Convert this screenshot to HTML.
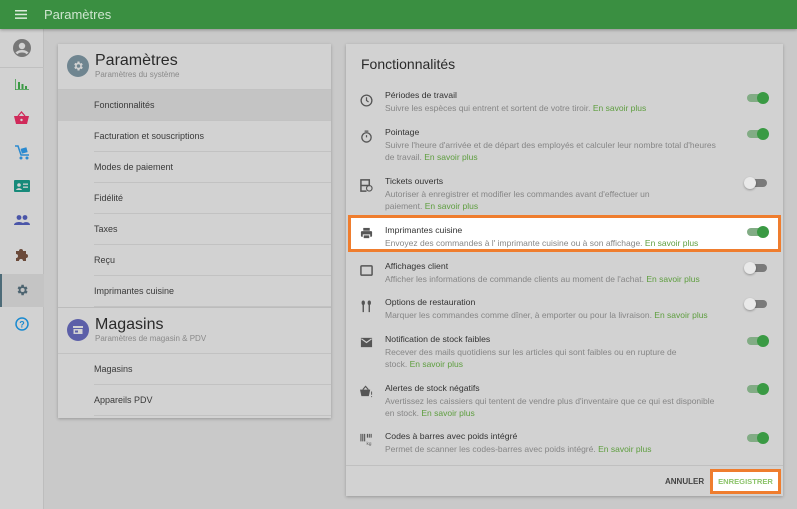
<!DOCTYPE html>
<html><head><meta charset="utf-8"><style>
*{box-sizing:border-box;margin:0;padding:0}
body{width:797px;height:509px;background:#c9c9c9;font-family:"Liberation Sans",sans-serif;position:relative;overflow:hidden;color:#333}
.top{position:absolute;left:0;top:0;width:797px;height:29px;background:#3a8f41;box-shadow:0 1px 3px rgba(0,0,0,.3);z-index:2}
.top .t{position:absolute;left:44px;top:7px;color:#cfe6d0;font-size:13px}
.side{position:absolute;left:0;top:29px;width:44px;height:480px;background:#d2d2d2;border-right:1px solid #bdbdbd}
.card{position:absolute;background:#d2d2d2;box-shadow:0 1px 3px rgba(0,0,0,.25)}
.row{position:absolute;left:0;right:0;height:31px;font-size:9px;color:#3a3a3a;padding-left:36px;line-height:31px}
.row:after{content:"";position:absolute;left:36px;right:0;bottom:0;border-bottom:1px solid #c2c2c2}
.f{position:absolute;left:39px;font-size:8.5px;line-height:12px;color:#868686;width:380px;white-space:nowrap}
.f b{display:block;font-weight:normal;color:#333;font-size:8.7px;margin-bottom:1px}
.f i{font-style:normal;color:#5e9e3f}
.tg{position:absolute;left:401px;width:20px;height:8px;border-radius:4px}
.tg:after{content:"";position:absolute;top:-2px;width:12px;height:12px;border-radius:6px}
.on{background:#82ac85}.on:after{right:-2px;background:#3a9a44}
.off{background:#7a7a7a}.off:after{left:-3px;background:#e9e9e9;box-shadow:0 1px 2px rgba(0,0,0,.3)}
.ri{position:absolute;left:14px;width:13px;height:13px}
</style></head><body>
<div class="top">
<svg style="position:absolute;left:15px;top:10px" width="12" height="9"><rect y="0" width="12" height="1.5" fill="#dcebdc"/><rect y="3.7" width="12" height="1.5" fill="#dcebdc"/><rect y="7.4" width="12" height="1.5" fill="#dcebdc"/></svg>
<div class="t">Paramètres</div></div>
<div class="side">
<svg style="position:absolute;left:13px;top:10px" width="18" height="18"><circle cx="9" cy="9" r="9" fill="#777"/><circle cx="9" cy="7" r="3.2" fill="#d2d2d2"/><path d="M3.5 14.5c2-3 9-3 11 0" stroke="#d2d2d2" stroke-width="2.5" fill="none"/></svg>
<div style="position:absolute;left:0;top:38px;width:44px;border-top:1px solid #c0c0c0"></div>
<svg style="position:absolute;left:15px;top:50px" width="14" height="11"><path d="M0 0v11h14" stroke="#3b9a44" stroke-width="1.5" fill="none"/><rect x="3" y="3" width="2" height="7" fill="#3b9a44"/><rect x="6.5" y="5" width="2" height="5" fill="#3b9a44"/><rect x="10" y="7" width="2" height="3" fill="#3b9a44"/></svg>
<svg style="position:absolute;left:14px;top:82px" width="15" height="13"><path d="M4 5l3.5-4 3.5 4" stroke="#d02a5a" stroke-width="1.3" fill="none"/><path d="M0 5h15l-2 8H2z" fill="#d02a5a"/><circle cx="7.5" cy="9" r="1.2" fill="#d2d2d2"/></svg>
<svg style="position:absolute;left:14px;top:116px" width="16" height="15"><path d="M1 1h3l3 9h8" stroke="#2a8ad0" stroke-width="1.5" fill="none"/><rect x="7" y="3" width="6" height="5" fill="#2a8ad0" transform="rotate(-15 10 5)"/><circle cx="7" cy="13" r="1.5" fill="#2a8ad0"/><circle cx="13" cy="13" r="1.5" fill="#2a8ad0"/></svg>
<svg style="position:absolute;left:14px;top:151px" width="16" height="12"><rect width="16" height="12" rx="1" fill="#178a7a"/><circle cx="5" cy="5" r="1.8" fill="#d2d2d2"/><path d="M2 10c1-2.5 5-2.5 6 0" fill="#d2d2d2"/><rect x="9" y="3.5" width="5" height="1.3" fill="#d2d2d2"/><rect x="9" y="6.5" width="5" height="1.3" fill="#d2d2d2"/></svg>
<svg style="position:absolute;left:14px;top:186px" width="16" height="10"><circle cx="5" cy="2.5" r="2.4" fill="#4a55a8"/><circle cx="11" cy="2.5" r="2.4" fill="#4a55a8"/><path d="M0 10c0-4 10-4 10 0zM8 10c0-3.5 8-4 8 0z" fill="#4a55a8"/></svg>
<svg style="position:absolute;left:15px;top:218px" width="14" height="14"><path d="M1 4h3a2 2 0 1 1 4 0h3v3a2 2 0 1 1 0 4v3H8a2 2 0 1 0-4 0H1v-3a2 2 0 1 0 0-4z" fill="#6b4a3a"/></svg>
<div style="position:absolute;left:0;top:245px;width:44px;height:33px;background:#c4c4c4;border-left:2px solid #4d6b78"></div>
<svg style="position:absolute;left:15px;top:254px" width="14" height="14" viewBox="0 0 24 24"><path fill="#4d6470" d="M19.4 13a7.5 7.5 0 0 0 0-2l2.1-1.6-2-3.5-2.5 1a7 7 0 0 0-1.7-1L15 3h-4l-.4 2.7a7 7 0 0 0-1.7 1l-2.5-1-2 3.5L6.6 11a7.5 7.5 0 0 0 0 2l-2.1 1.6 2 3.5 2.5-1a7 7 0 0 0 1.7 1L11 21h4l.4-2.7a7 7 0 0 0 1.7-1l2.5 1 2-3.5zM13 15.5a3.5 3.5 0 1 1 0-7 3.5 3.5 0 0 1 0 7z"/></svg>
<svg style="position:absolute;left:15px;top:288px" width="14" height="14"><circle cx="7" cy="7" r="6" stroke="#1a8ad0" stroke-width="1.5" fill="none"/><text x="7" y="10.5" font-size="9" text-anchor="middle" fill="#1a8ad0" font-family="Liberation Sans" font-weight="bold">?</text></svg>
</div>

<div class="card" style="left:58px;top:44px;width:273px;height:374px">
<svg style="position:absolute;left:9px;top:11px" width="22" height="22"><circle cx="11" cy="11" r="11" fill="#6f8590"/><g transform="translate(5,5) scale(.5)"><path fill="#d2d2d2" d="M19.4 13a7.5 7.5 0 0 0 0-2l2.1-1.6-2-3.5-2.5 1a7 7 0 0 0-1.7-1L15 3h-4l-.4 2.7a7 7 0 0 0-1.7 1l-2.5-1-2 3.5L6.6 11a7.5 7.5 0 0 0 0 2l-2.1 1.6 2 3.5 2.5-1a7 7 0 0 0 1.7 1L11 21h4l.4-2.7a7 7 0 0 0 1.7-1l2.5 1 2-3.5zM13 15.5a3.5 3.5 0 1 1 0-7 3.5 3.5 0 0 1 0 7z"/></g></svg>
<div style="position:absolute;left:37px;top:8px;font-size:16px;color:#2a2a2a">Paramètres</div>
<div style="position:absolute;left:37px;top:26px;font-size:8px;color:#8a8a8a">Paramètres du système</div>
<div style="position:absolute;left:0;right:0;top:45px;border-top:1px solid #c2c2c2"></div>
<div class="row" style="top:46px;background:#c4c4c4">Fonctionnalités</div>
<div class="row" style="top:77px">Facturation et souscriptions</div>
<div class="row" style="top:108px">Modes de paiement</div>
<div class="row" style="top:139px">Fidélité</div>
<div class="row" style="top:170px">Taxes</div>
<div class="row" style="top:201px">Reçu</div>
<div class="row" style="top:232px">Imprimantes cuisine</div>
<div style="position:absolute;left:0;right:0;top:263px;border-top:1px solid #bcbcbc"></div>
<svg style="position:absolute;left:9px;top:275px" width="22" height="22"><circle cx="11" cy="11" r="11" fill="#5c5fa8"/><path d="M6 7h10v2H6zM6.5 10h9v5h-9z" fill="#d2d2d2"/><rect x="8" y="11.5" width="3" height="2" fill="#5c5fa8"/></svg>
<div style="position:absolute;left:37px;top:272px;font-size:16px;color:#2a2a2a">Magasins</div>
<div style="position:absolute;left:37px;top:290px;font-size:8px;color:#8a8a8a">Paramètres de magasin &amp; PDV</div>
<div style="position:absolute;left:0;right:0;top:309px;border-top:1px solid #c2c2c2"></div>
<div class="row" style="top:310px">Magasins</div>
<div class="row" style="top:341px">Appareils PDV</div>
</div>

<div class="card" style="left:346px;top:44px;width:437px;height:452px">
<div style="position:absolute;left:15px;top:12px;font-size:14px;color:#2a2a2a">Fonctionnalités</div>

<svg class="ri" style="top:50px" viewBox="0 0 14 14"><circle cx="7" cy="7" r="5.8" stroke="#555" stroke-width="1.4" fill="none"/><path d="M7 3.5V7l2.2 1.6" stroke="#555" stroke-width="1.3" fill="none"/></svg>
<div class="f" style="top:45px"><b>Périodes de travail</b>Suivre les espèces qui entrent et sortent de votre tiroir. <i>En savoir plus</i></div>
<div class="tg on" style="top:50px"></div>

<svg class="ri" style="top:86px" viewBox="0 0 14 14"><circle cx="7" cy="8" r="5" stroke="#555" stroke-width="1.4" fill="none"/><path d="M5 1.2h4M7 8V5.5" stroke="#555" stroke-width="1.3"/></svg>
<div class="f" style="top:82px"><b>Pointage</b>Suivre l'heure d'arrivée et de départ des employés et calculer leur nombre total d'heures<br>de travail. <i>En savoir plus</i></div>
<div class="tg on" style="top:86px"></div>

<svg class="ri" style="top:135px" viewBox="0 0 14 14"><path d="M1 1h9v6H1zM1 7v6h6" stroke="#555" stroke-width="1.6" fill="none"/><circle cx="10" cy="10" r="3" stroke="#555" stroke-width="1.2" fill="none"/></svg>
<div class="f" style="top:131px"><b>Tickets ouverts</b>Autoriser à enregistrer et modifier les commandes avant d'effectuer un<br>paiement. <i>En savoir plus</i></div>
<div class="tg off" style="top:135px"></div>

<div style="position:absolute;left:2px;top:171px;width:433px;height:37px;background:#fff;border:3px solid #ef7d2e"></div>
<svg class="ri" style="top:183px" viewBox="0 0 14 14"><rect x="3.5" y="1" width="7" height="3" fill="#555"/><rect x="1" y="4.5" width="12" height="6" rx="1" fill="#555"/><rect x="3.5" y="8.5" width="7" height="4" fill="#555" stroke="#fff" stroke-width="1"/></svg>
<div class="f" style="top:180px"><b>Imprimantes cuisine</b>Envoyez des commandes à l' imprimante cuisine ou à son affichage. <i>En savoir plus</i></div>
<div class="tg on" style="top:184px"></div>

<svg class="ri" style="top:220px" viewBox="0 0 14 14"><rect x="1" y="2" width="12" height="10" rx="1" stroke="#555" stroke-width="1.6" fill="none"/></svg>
<div class="f" style="top:216px"><b>Affichages client</b>Afficher les informations de commande clients au moment de l'achat. <i>En savoir plus</i></div>
<div class="tg off" style="top:220px"></div>

<svg class="ri" style="top:256px" viewBox="0 0 14 14"><path d="M3.5 1v12M10 1v12" stroke="#555" stroke-width="1.5"/><ellipse cx="3.5" cy="3" rx="1.8" ry="2.5" fill="#555"/><ellipse cx="10" cy="3" rx="1.8" ry="2.5" fill="#555"/></svg>
<div class="f" style="top:252px"><b>Options de restauration</b>Marquer les commandes comme dîner, à emporter ou pour la livraison. <i>En savoir plus</i></div>
<div class="tg off" style="top:256px"></div>

<svg class="ri" style="top:292px" viewBox="0 0 14 14"><rect x="1" y="2" width="12" height="10" fill="#555"/><path d="M1.5 3l5.5 4 5.5-4" stroke="#d2d2d2" stroke-width="1.2" fill="none"/></svg>
<div class="f" style="top:289px"><b>Notification de stock faibles</b>Recever des mails quotidiens sur les articles qui sont faibles ou en rupture de<br>stock. <i>En savoir plus</i></div>
<div class="tg on" style="top:293px"></div>

<svg class="ri" style="top:341px" viewBox="0 0 14 14"><path d="M3 5l3-3.5L9 5" stroke="#555" stroke-width="1.2" fill="none"/><path d="M0 5h11l-1.5 7h-8z" fill="#555"/><path d="M12.5 7v3.5M12.5 12v1" stroke="#555" stroke-width="1"/></svg>
<div class="f" style="top:338px"><b>Alertes de stock négatifs</b>Avertissez les caissiers qui tentent de vendre plus d'inventaire que ce qui est disponible<br>en stock. <i>En savoir plus</i></div>
<div class="tg on" style="top:341px"></div>

<svg class="ri" style="top:389px" viewBox="0 0 14 14"><path d="M1 1v8M3 1v8M5 1v8M8 1v4M10 1v4M12 1v4" stroke="#555" stroke-width="1.2"/><text x="7" y="13" font-size="5" fill="#555" font-family="Liberation Sans">kg</text></svg>
<div class="f" style="top:386px"><b>Codes à barres avec poids intégré</b>Permet de scanner les codes-barres avec poids intégré. <i>En savoir plus</i></div>
<div class="tg on" style="top:390px"></div>

<div style="position:absolute;left:0;right:0;top:421px;border-top:1px solid #c0c0c0"></div>
<div style="position:absolute;left:319px;top:433px;font-size:8px;font-weight:bold;color:#444">ANNULER</div>
<div style="position:absolute;left:364px;top:425px;width:71px;height:25px;background:#fff;border:3px solid #ef7d2e;font-size:7.6px;font-weight:bold;color:#8cc36a;text-align:center;line-height:19px;white-space:nowrap">ENREGISTRER</div>
</div>
</body></html>
